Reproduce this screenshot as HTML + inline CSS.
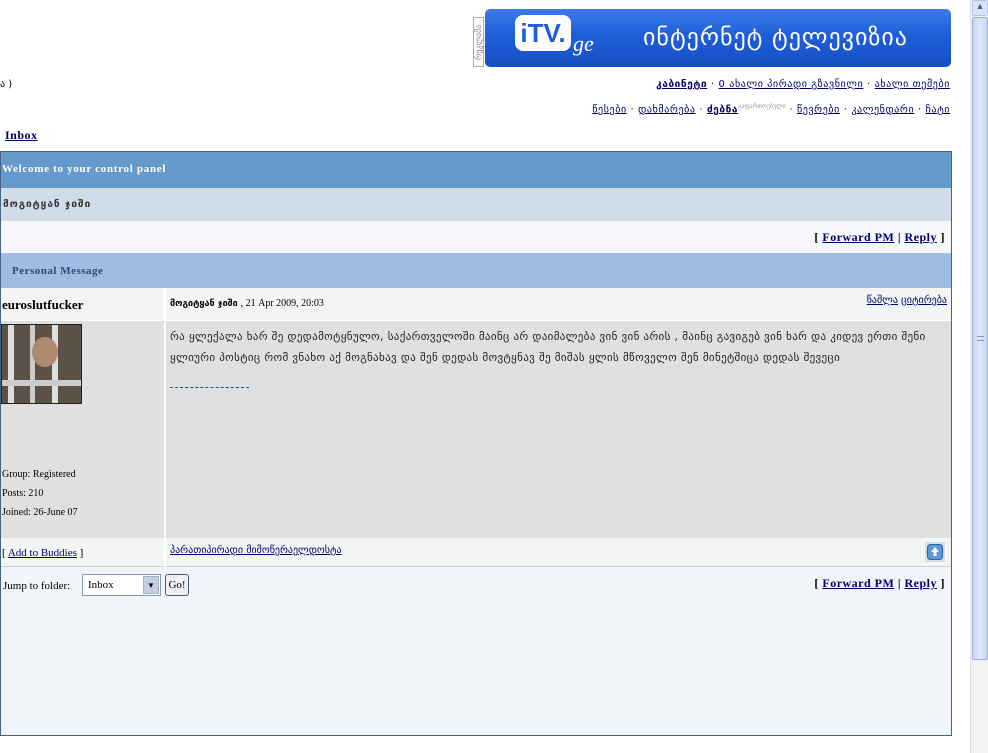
<!DOCTYPE html>
<html><head><meta charset="utf-8"><style>
*{margin:0;padding:0;box-sizing:border-box}
body{width:988px;height:753px;overflow:hidden;background:#fff;font-family:"Liberation Serif","DejaVu Serif",serif;font-size:11px;color:#000;position:relative}
a{color:#000066;text-decoration:underline}
.abs{position:absolute}
.geo{font-family:"DejaVu Sans",sans-serif;font-size:10px}
.sb{position:absolute;right:0;top:0;width:18px;height:753px;background:#f2f2f0;border-left:1px solid #e0e0e0}
.thumb{position:absolute;left:1px;top:17px;width:16px;height:643px;background:linear-gradient(90deg,#c9d4f0,#dfe6fa,#c9d4f0);border:1px solid #9eaed6;border-radius:2px}
.btn{position:absolute;left:1px;width:16px;height:16px;background:#dbe3f8;border:1px solid #b5c3e8;border-radius:2px;font-size:9px;text-align:center;color:#4d6185}
#tbl{position:absolute;left:0;top:151px;width:952px;height:585px;border:1px solid #456287;background:#f1f5fa}
.row{position:absolute;left:0;width:950px}
</style></head><body>
<div class="abs" style="left:473px;top:17px;width:11px;height:50px;border:1px solid #aaa;font-size:8px;color:#888;writing-mode:vertical-rl;transform:rotate(180deg);font-family:'DejaVu Sans',sans-serif;text-align:center">რეკლამა</div>
<div class="abs" style="left:485px;top:9px;width:466px;height:58px;border-radius:5px;background:linear-gradient(180deg,#3d7be8 0%,#1e5fd9 45%,#174fc4 100%)">
 <div class="abs" style="left:30px;top:6px;width:56px;height:36px;background:#fff;border-radius:8px;color:#1e5fd9;font:bold 26px 'Liberation Sans',sans-serif;line-height:36px;text-align:center">iTV.</div>
 <div class="abs" style="left:88px;top:22px;color:#fff;font:italic 22px 'Liberation Serif',serif">ge</div>
 <div class="abs" style="left:158px;top:14px;color:#fff;font-size:24px;font-family:'DejaVu Sans',sans-serif;letter-spacing:1px">ინტერნეტ ტელევიზია</div>
</div>
<div class="abs geo" style="left:0;top:79px">ა )</div>
<div class="abs geo" style="right:38px;top:79px;font-size:10px;letter-spacing:0.6px"><a href="#"><b>კაბინეტი</b></a> · <a href="#">0 ახალი პირადი გზავნილი</a> · <a href="#">ახალი თემები</a></div>
<div class="abs geo" style="right:38px;top:103px;font-size:10px;letter-spacing:0.6px"><a href="#">წესები</a> · <a href="#">დახმარება</a> · <a href="#"><b>ძებნა</b></a><sup style="font-size:6px;color:#999;letter-spacing:0">გაფართოებული</sup> · <a href="#">წევრები</a> · <a href="#">კალენდარი</a> · <a href="#">ჩატი</a></div>
<div class="abs" style="left:5px;top:128px;font-weight:bold;font-size:12px;letter-spacing:0.5px"><a href="#">Inbox</a></div>
<div id="tbl">
 <div class="row" style="top:0;height:36px;background:#6699cc;color:#fff;font-weight:bold;padding:11px 0 0 1px;font-size:11px;letter-spacing:0.7px">Welcome to your control panel</div>
 <div class="row geo" style="top:36px;height:33px;background:#d1dcea;padding:11px 0 0 2px;font-weight:bold;color:#333;letter-spacing:1px">მოგიტყან ჯიში</div>
 <div class="row" style="top:69px;height:32px;background:#f5f7fa;text-align:right;padding:9px 6px 0 0;font-weight:bold;font-size:12px;letter-spacing:0.5px">[ <a href="#">Forward PM</a> | <a href="#">Reply</a> ]</div>
 <div class="row" style="top:101px;height:35px;background:#9dbde3;padding:12px 0 0 11px;font-weight:bold;color:#2c4b78;letter-spacing:0.5px">Personal Message</div>
 <div class="row" style="top:136px;height:33px;background:#f3f5f5;border-bottom:1px solid #fff">
  <div class="abs" style="left:1px;top:9px;font-weight:bold;font-size:13px">euroslutfucker</div>
  <div class="abs" style="left:163px;top:0;width:2px;height:33px;background:#fff"></div>
  <div class="abs geo" style="left:169px;top:10px;font-size:9px"><b>მოგიტყან ჯიში</b> <span style="font-family:'Liberation Serif',serif;font-size:10px">, 21 Apr 2009, 20:03</span></div>
  <div class="abs geo" style="right:4px;top:7px"><a href="#">წაშლა</a> <a href="#">ციტირება</a></div>
 </div>
 <div class="row" style="top:169px;height:217px;background:#dfe0e0">
  <div class="abs" style="left:0;top:3px;width:81px;height:80px;background:#5c5248;border:1px solid #222;overflow:hidden">
   <div class="abs" style="left:6px;top:0;width:6px;height:80px;background:#ddd"></div>
   <div class="abs" style="left:28px;top:0;width:5px;height:80px;background:#ccc"></div>
   <div class="abs" style="left:50px;top:0;width:6px;height:80px;background:#ddd"></div>
   <div class="abs" style="left:30px;top:12px;width:26px;height:30px;border-radius:50%;background:#b08a70"></div>
   <div class="abs" style="left:0;top:55px;width:81px;height:6px;background:#ccc"></div>
  </div>
  <div class="abs" style="left:1px;top:144px;line-height:19px;font-size:10px">Group: Registered<br>Posts: 210<br>Joined: 26-June 07</div>
  <div class="abs" style="left:163px;top:0;width:2px;height:217px;background:#fff"></div>
  <div class="abs geo" style="left:169px;top:5px;width:780px;line-height:21px;color:#222;font-size:11px;letter-spacing:0.35px">რა ყლექალა ხარ შე დედამოტყნულო, საქართველოში მაინც არ დაიმალება ვინ ვინ არის , მაინც გავიგებ ვინ ხარ და კიდევ ერთი შენი ყლიური პოსტიც რომ ვნახო აქ მოგნახავ და შენ დედას მოვტყნავ შე მიშას ყლის მწოველო შენ მინეტშიცა დედას შევეცი</div>
  <div class="abs" style="left:169px;top:66px;width:79px;border-top:1px dashed #334488"></div>
 </div>
 <div class="row" style="top:386px;height:29px;background:#f3f5f5;border-bottom:1px solid #c8d0d8">
  <div class="abs" style="left:1px;top:9px;font-size:11px">[ <a href="#">Add to Buddies</a> ]</div>
  <div class="abs" style="left:163px;top:0;width:2px;height:29px;background:#fff"></div>
  <div class="abs geo" style="left:169px;top:7px"><a href="#">პარათიპირადი მიმოწერაელდოსტა</a></div>
  <div class="abs" style="right:6px;top:4px;width:20px;height:20px;background:#d5dde8;padding:2px"><svg width="16" height="16"><rect x="0.5" y="0.5" width="15" height="15" rx="3" fill="#5a98d8" stroke="#2c5f9a"/><path d="M8 3 L12 8 H9.5 V12 H6.5 V8 H4 Z" fill="#fff"/></svg></div>
 </div>
 <div class="abs" style="left:2px;top:428px;font-size:11px">Jump to folder:</div>
 <div class="abs" style="left:81px;top:422px;width:79px;height:22px;border:1px solid #7f9db9;background:#fff;font-size:11px;padding:4px 0 0 5px">Inbox<div class="abs" style="right:1px;top:1px;width:16px;height:18px;background:#c4cede;border:1px solid #a0b0c8;font-size:9px;text-align:center;line-height:16px">▾</div></div>
 <div class="abs" style="left:164px;top:422px;width:24px;height:22px;border:1px solid #4a5a78;border-radius:3px;background:#eef0f6;font-size:11px;text-align:center;line-height:20px">Go!</div>
 <div class="abs" style="right:6px;top:424px;font-weight:bold;font-size:12px;letter-spacing:0.5px">[ <a href="#">Forward PM</a> | <a href="#">Reply</a> ]</div>
</div>
<div class="sb"><div class="btn" style="top:0">▲</div><div class="thumb"><div style="position:absolute;top:318px;left:4px;width:7px;border-top:1px solid #8899bb;height:5px;border-bottom:1px solid #8899bb"></div></div></div>
</body></html>
